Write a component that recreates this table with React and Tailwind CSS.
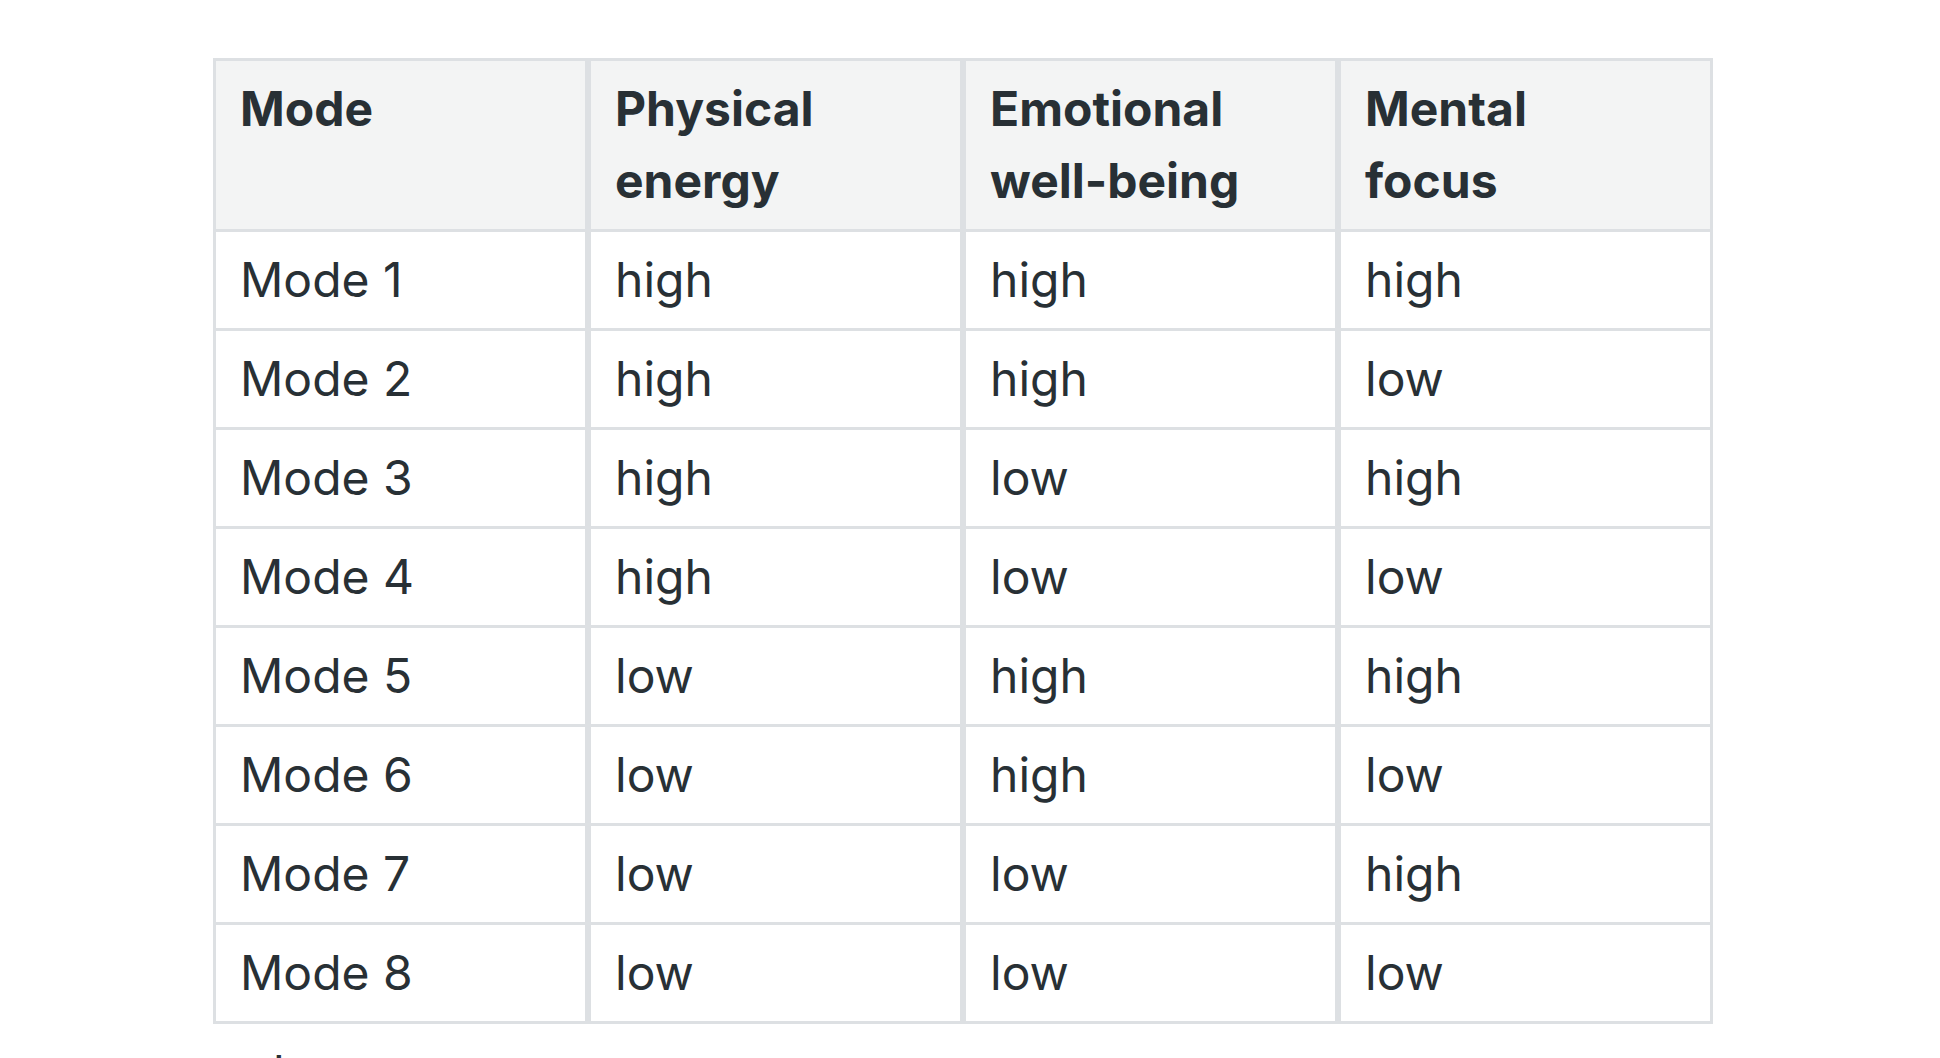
import React from "react";

const rows = [
  ["Mode 1", "high", "high", "high"],
  ["Mode 2", "high", "high", "low"],
  ["Mode 3", "high", "low", "high"],
  ["Mode 4", "high", "low", "low"],
  ["Mode 5", "low", "high", "high"],
  ["Mode 6", "low", "high", "low"],
  ["Mode 7", "low", "low", "high"],
  ["Mode 8", "low", "low", "low"],
];

const headers = [
  ["Mode"],
  ["Physical", "energy"],
  ["Emotional", "well-being"],
  ["Mental", "focus"],
];

export default function App() {
  return (
    <div
      className="min-h-screen bg-white pl-[213px] pt-[58px] text-[#283035]"
      style={{ fontFamily: "Inter, 'Noto Sans', sans-serif" }}
    >
      <table className="table-fixed w-[1500px] border-separate border-spacing-0 text-[48px] leading-[72px]">
        <thead>
          <tr className="bg-[#f3f4f4]">
            {headers.map((h) => (
              <th
                key={h.join(" ")}
                className="border-x-[3px] border-t-[3px] border-[#dde0e3] px-6 py-3 text-left align-top font-bold"
              >
                {h.map((part, k) => (
                  <React.Fragment key={part}>
                    {k > 0 && <br />}
                    {part}
                  </React.Fragment>
                ))}
              </th>
            ))}
          </tr>
        </thead>
        <tbody>
          {rows.map((r, i) => (
            <tr key={r[0]} className="bg-white">
              {r.map((c, j) => (
                <td
                  key={j}
                  className={
                    i === rows.length - 1
                      ? "border-[3px] border-[#dde0e3] px-6 py-3 align-top font-normal"
                      : "border-x-[3px] border-t-[3px] border-[#dde0e3] px-6 py-3 align-top font-normal"
                  }
                >
                  {c}
                </td>
              ))}
            </tr>
          ))}
        </tbody>
      </table>
      <p className="mt-[13px] pl-[60px] text-[48px] leading-[72px]">low means reserves are scarce</p>
    </div>
  );
}
